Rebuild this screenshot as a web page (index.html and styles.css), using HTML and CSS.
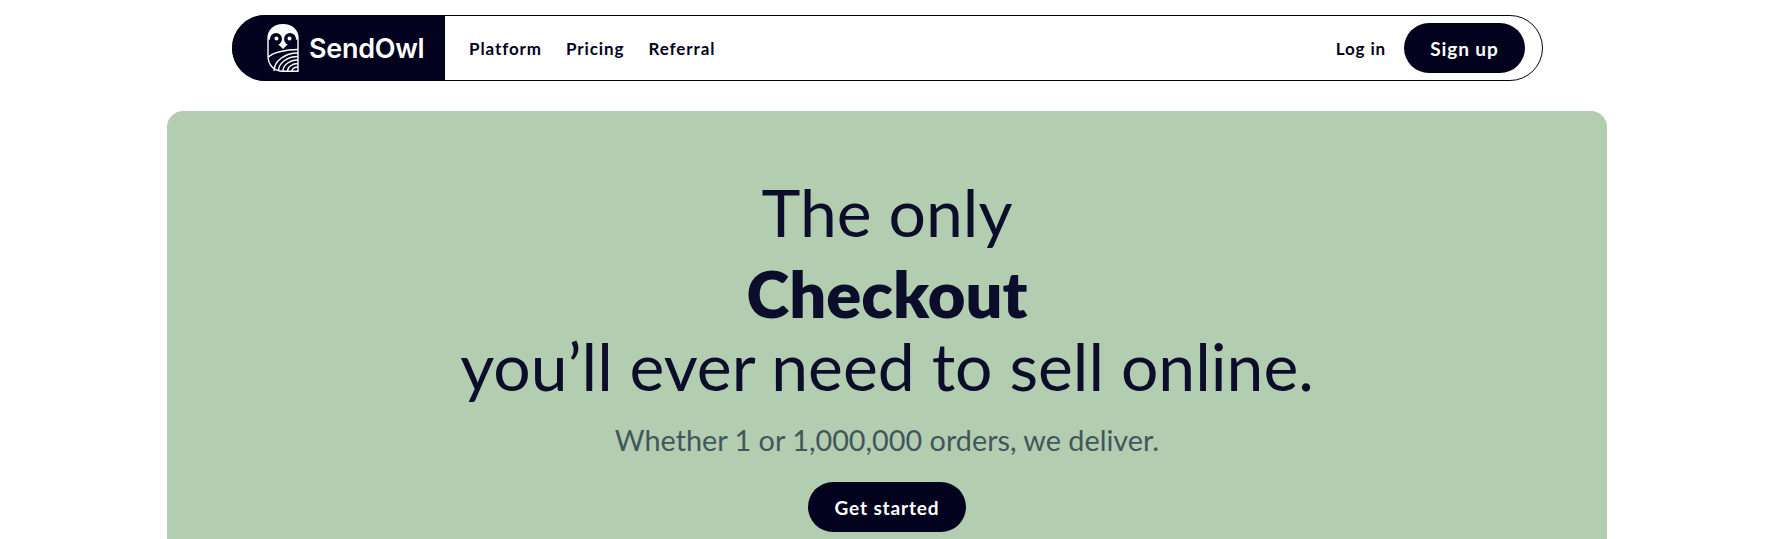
FILE: index.html
```html
<!DOCTYPE html>
<html lang="en">
<head>
    <meta charset="UTF-8">
    <meta name="viewport" content="width=device-width, initial-scale=1.0">
    <title>SendOwl</title>
    <link rel="stylesheet" href="styles.css">
</head>
<body>
    <nav class="navbar">
        <a class="brand" href="#">
            <svg class="owl" width="32" height="48" viewBox="0 0 32 48" fill="none" stroke="#fff" stroke-width="1.4">
                <!-- body outline -->
                <path d="M31 47.300H16C7 47.300 1 41 1 32V15C1 6 7 .8 16 .8s15 5.200 15 14.200z"/>
                <!-- head, eyes sit on top of it -->
                <path d="M1 15C1 6 7 .8 16 .8S31 6 31 15L22 19l-6 6-6-6z" fill="#fff" stroke="none"/>
                <circle cx="9" cy="15" r="6" fill="#02021e" stroke="none"/>
                <circle cx="23" cy="15" r="6" fill="#02021e" stroke="none"/>
                <circle cx="9.500" cy="14.500" r="2" fill="#fff" stroke="none"/>
                <circle cx="22.500" cy="14.500" r="2" fill="#fff" stroke="none"/>
                <!-- wing stripes -->
                <path d="M31 25.500C18 25.500 5 29 1.500 33M31 29A24 18 0 0 0 7 47M31 32.500A19.500 14.500 0 0 0 11.500 47M31 36A15 11 0 0 0 16 47M31 39.500A10.500 7.500 0 0 0 20.500 47M31 43A6 4 0 0 0 25 47"/>
            </svg>
            <span class="brand-name">SendOwl</span>
        </a>
        <div class="nav-links">
            <a href="#">Platform</a>
            <a href="#">Pricing</a>
            <a href="#">Referral</a>
        </div>
        <div class="nav-actions">
            <a class="login" href="#">Log in</a>
            <a class="btn btn-signup" href="#">Sign up</a>
        </div>
    </nav>

    <section class="hero">
        <h1>
            The only
            <strong>Checkout</strong>
            you’ll ever need to sell online.
        </h1>
        <p>Whether 1 or 1,000,000 orders, we deliver.</p>
        <a class="btn btn-start" href="#">Get started</a>
    </section>
</body>
</html>
```

FILE: styles.css
```css
* {
    margin: 0;
    padding: 0;
    box-sizing: border-box;
}

html, body {
    height: 539px;
    overflow: hidden;
}

body {
    background-color: #fff;
    color: #02021e;
    font-family: "Lato", "Open Sans", sans-serif;
    padding: 15px 2px 0 0;
}

a {
    color: inherit;
    text-decoration: none;
}

.navbar {
    width: 1311px;
    height: 66px;
    margin: 0 0 0 232px;
    display: flex;
    align-items: center;
    border: 1px solid #02021e;
    border-radius: 33px;
}

.brand {
    width: 213px;
    height: 66px;
    margin: -1px 0 -1px -1px;
    display: flex;
    align-items: center;
    gap: 10px;
    padding-left: 35px;
    background-color: #02021e;
    border-radius: 33px 0 0 33px;
    color: #fff;
}

.brand-name {
    font-family: "Inter", sans-serif;
    font-size: 27px;
    font-weight: 600;
    letter-spacing: -0.3px;
}

.nav-links {
    display: flex;
    gap: 24px;
    margin-left: 24px;
    font-size: 17px;
    font-weight: 700;
    letter-spacing: 0.9px;
}

.nav-actions {
    margin-left: auto;
    margin-right: 17px;
    display: flex;
    align-items: center;
    gap: 18px;
    font-size: 17px;
    font-weight: 700;
    letter-spacing: 0.85px;
}

.btn {
    display: flex;
    align-items: center;
    justify-content: center;
    background-color: #02021e;
    color: #fff;
    font-weight: 700;
    border-radius: 25px;
}

.btn-signup {
    width: 121px;
    height: 50px;
    font-size: 19px;
    letter-spacing: 0.9px;
}

.hero {
    width: 1440px;
    height: 428px;
    margin: 30px auto 0;
    padding-top: 65px;
    display: flex;
    flex-direction: column;
    align-items: center;
    background-color: #b3cdb0;
    border-radius: 16px 16px 0 0;
    text-align: center;
}

h1 {
    font-size: 66px;
    font-weight: 400;
    line-height: 72px;
    color: #0b0d2a;
}

h1 strong {
    display: block;
    padding: 10px 0 2px;
    font-size: 65px;
    font-weight: 800;
    line-height: 70px;
}

.hero p {
    margin-top: 18px;
    font-size: 28.8px;
    line-height: 40px;
    color: #43565c;
}

.btn-start {
    width: 158px;
    height: 50px;
    margin-top: 22px;
    font-size: 19px;
    letter-spacing: 0.85px;
}
```
